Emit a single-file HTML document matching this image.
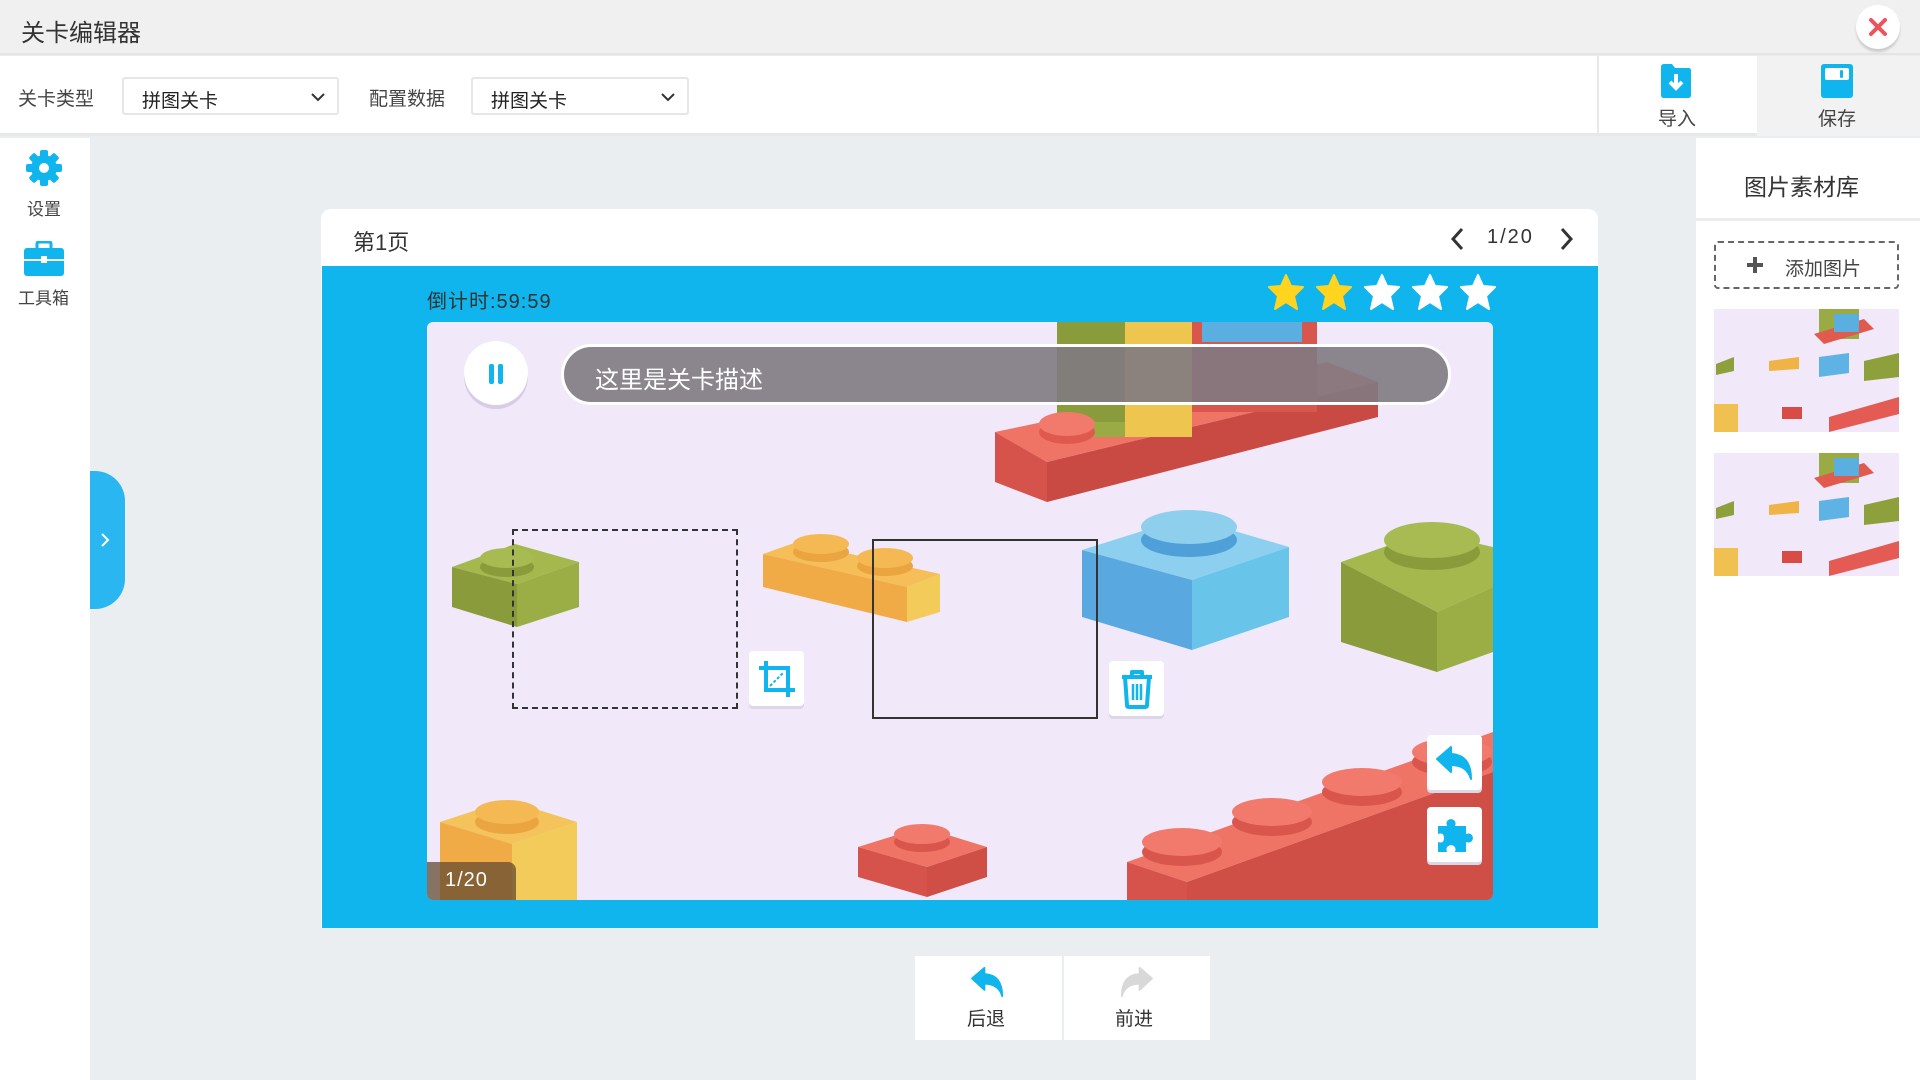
<!DOCTYPE html>
<html><head><meta charset="utf-8"><style>
*{margin:0;padding:0;box-sizing:border-box}
body{width:1920px;height:1080px;background:#ebeef1;font-family:"Liberation Sans","Noto Sans CJK SC",sans-serif;color:#333;position:relative;overflow:hidden}
.a{position:absolute}
.sel{position:absolute;background:#fff;border:2px solid #e6e6e6;border-radius:3px;font-size:19px;color:#222;padding-left:18px}
.sel span{position:absolute;left:18px;top:7px}
.sel svg{position:absolute;right:12px;top:14px}
.btn{position:absolute;background:#fff;border-radius:4px;box-shadow:0 3px 0 #ddd6e6;display:flex;align-items:center;justify-content:center}
</style></head><body>
<div class="a" style="left:0;top:0;width:1920px;height:55px;background:#f0f0f0;border-bottom:2px solid #e4e4e4"></div>
<div class="a" style="left:21px;top:13px;font-size:24px;color:#333">关卡编辑器</div>
<div class="a" style="left:1856px;top:5px;width:44px;height:44px;border-radius:50%;background:#fff;box-shadow:0 3px 2px #ccc"></div>
<svg class="a" style="left:1868px;top:17px" width="20" height="20" viewBox="0 0 20 20"><path d="M3 3L17 17M17 3L3 17" stroke="#f0525b" stroke-width="4" stroke-linecap="round"/></svg>
<div class="a" style="left:0;top:56px;width:1920px;height:80px;background:#fff;border-bottom:3px solid #e8e8e8"></div>
<div class="a" style="left:18px;top:84px;font-size:19px;color:#444">关卡类型</div>
<div class="sel" style="left:122px;top:77px;width:217px;height:38px"><span>拼图关卡</span><svg width="14" height="9" viewBox="0 0 14 9"><path d="M1 1L7 7L13 1" fill="none" stroke="#333" stroke-width="2"/></svg></div>
<div class="a" style="left:369px;top:84px;font-size:19px;color:#444">配置数据</div>
<div class="sel" style="left:471px;top:77px;width:218px;height:38px"><span>拼图关卡</span><svg width="14" height="9" viewBox="0 0 14 9"><path d="M1 1L7 7L13 1" fill="none" stroke="#333" stroke-width="2"/></svg></div>
<div class="a" style="left:1597px;top:56px;width:2px;height:80px;background:#e8e8e8"></div>
<div class="a" style="left:1757px;top:56px;width:163px;height:80px;background:#f2f2f2"></div>
<svg class="a" style="left:1659px;top:63px" width="34" height="36" viewBox="0 0 34 36"><path d="M2 4Q2 1 5 1H13L16 5H30Q32 5 32 8V32Q32 35 29 35H5Q2 35 2 32Z" fill="#0fb5ec"/><path d="M17 11V24M11 19L17 25L23 19" fill="none" stroke="#fff" stroke-width="4"/></svg>
<div class="a" style="left:1658px;top:104px;font-size:19px;color:#444">导入</div>
<svg class="a" style="left:1820px;top:63px" width="34" height="36" viewBox="0 0 34 36"><rect x="1" y="1" width="32" height="34" rx="3" fill="#0fb5ec"/><rect x="5" y="5" width="24" height="12" rx="2" fill="#fff"/><rect x="20" y="7" width="3" height="8" rx="1.5" fill="#0fb5ec"/></svg>
<div class="a" style="left:1818px;top:104px;font-size:19px;color:#444">保存</div>
<div class="a" style="left:0;top:138px;width:90px;height:942px;background:#fff"></div>
<svg class="a" style="left:25px;top:149px" width="38" height="38" viewBox="0 0 38 38"><g fill="#0fb5ec"><circle cx="19" cy="19" r="13"/><g id="t"><rect x="15" y="1" width="8" height="36" rx="2"/></g><use href="#t" transform="rotate(45 19 19)"/><use href="#t" transform="rotate(90 19 19)"/><use href="#t" transform="rotate(135 19 19)"/></g><circle cx="19" cy="19" r="5" fill="#fff"/></svg>
<div class="a" style="left:27px;top:195px;font-size:17px;color:#444">设置</div>
<svg class="a" style="left:24px;top:241px" width="40" height="35" viewBox="0 0 40 35"><path d="M13 7V3Q13 1 15 1H25Q27 1 27 3V7" fill="none" stroke="#0fb5ec" stroke-width="3"/><rect x="0" y="7" width="40" height="28" rx="3" fill="#0fb5ec"/><rect x="0" y="18" width="40" height="2" fill="#fff"/><rect x="17" y="15" width="6" height="7" fill="#fff"/></svg>
<div class="a" style="left:18px;top:284px;font-size:17px;color:#444">工具箱</div>
<div class="a" style="left:90px;top:471px;width:35px;height:138px;background:#2ab6f0;border-radius:0 30px 30px 0"></div>
<svg class="a" style="left:100px;top:533px" width="10" height="14" viewBox="0 0 10 14"><path d="M2 1L8 7L2 13" fill="none" stroke="#fff" stroke-width="2"/></svg>
<div class="a" style="left:1696px;top:138px;width:224px;height:942px;background:#fff"></div>
<div class="a" style="left:1696px;top:218px;width:224px;height:3px;background:#ececec"></div>
<div class="a" style="left:1744px;top:168px;font-size:23px;color:#333">图片素材库</div>
<div class="a" style="left:1714px;top:241px;width:185px;height:48px;border:2px dashed #666;border-radius:4px"></div>
<svg class="a" style="left:1745px;top:255px" width="20" height="20" viewBox="0 0 20 20"><path d="M10 2V18M2 10H18" stroke="#555" stroke-width="4"/></svg>
<div class="a" style="left:1785px;top:254px;font-size:19px;color:#444">添加图片</div>
<svg class="a" style="left:1714px;top:309px" width="185" height="123" viewBox="0 0 185 123"><rect width="185" height="123" fill="#f1e8fa"/><rect x="105" y="0" width="40" height="30" fill="#9aab45"/><polygon points="100,25 150,10 160,20 110,35" fill="#e05a4e"/><rect x="120" y="5" width="25" height="18" fill="#5aaee0"/><polygon points="2,55 20,48 20,62 2,66" fill="#8ea03c"/><polygon points="55,52 85,48 85,60 55,62" fill="#f0b446"/><polygon points="105,48 135,44 135,64 105,68" fill="#5eb3e4"/><polygon points="150,52 185,44 185,68 150,72" fill="#8ea03c"/><rect x="0" y="95" width="24" height="28" fill="#f0c050"/><rect x="68" y="98" width="20" height="12" fill="#d94b45"/><polygon points="115,108 185,88 185,105 115,123" fill="#e45b53"/></svg>
<svg class="a" style="left:1714px;top:453px" width="185" height="123" viewBox="0 0 185 123"><rect width="185" height="123" fill="#f1e8fa"/><rect x="105" y="0" width="40" height="30" fill="#9aab45"/><polygon points="100,25 150,10 160,20 110,35" fill="#e05a4e"/><rect x="120" y="5" width="25" height="18" fill="#5aaee0"/><polygon points="2,55 20,48 20,62 2,66" fill="#8ea03c"/><polygon points="55,52 85,48 85,60 55,62" fill="#f0b446"/><polygon points="105,48 135,44 135,64 105,68" fill="#5eb3e4"/><polygon points="150,52 185,44 185,68 150,72" fill="#8ea03c"/><rect x="0" y="95" width="24" height="28" fill="#f0c050"/><rect x="68" y="98" width="20" height="12" fill="#d94b45"/><polygon points="115,108 185,88 185,105 115,123" fill="#e45b53"/></svg>
<div class="a" style="left:321px;top:209px;width:1277px;height:719px;background:#fff;border-radius:10px 10px 0 0"></div>
<div class="a" style="left:353px;top:225px;font-size:22px;color:#333">第1页</div>
<svg class="a" style="left:1450px;top:227px" width="14" height="24" viewBox="0 0 14 24"><path d="M12 2L3 12L12 22" fill="none" stroke="#333" stroke-width="3"/></svg>
<div class="a" style="left:1487px;top:226px;font-size:20px;color:#333;letter-spacing:2px">1/20</div>
<svg class="a" style="left:1560px;top:227px" width="14" height="24" viewBox="0 0 14 24"><path d="M2 2L11 12L2 22" fill="none" stroke="#333" stroke-width="3"/></svg>
<div class="a" style="left:322px;top:266px;width:1276px;height:662px;background:#0fb5ec"></div>
<div class="a" style="left:427px;top:285px;font-size:20px;color:#333;letter-spacing:1px">倒计时:59:59</div>
<svg class="a" style="left:1266px;top:274px" width="236" height="40" viewBox="0 0 236 40">
<defs><path id="s" d="M18 1L23 12L35 13L26 22L29 35L18 28L7 35L10 22L1 13L13 12Z" stroke-linejoin="round"/></defs>
<use href="#s" x="2" fill="#ffd41f" stroke="#ffd41f" stroke-width="2"/><use href="#s" x="50" fill="#ffd41f" stroke="#ffd41f" stroke-width="2"/><use href="#s" x="98" fill="#fff" stroke="#fff" stroke-width="2"/><use href="#s" x="146" fill="#fff" stroke="#fff" stroke-width="2"/><use href="#s" x="194" fill="#fff" stroke="#fff" stroke-width="2"/></svg>
<div class="a" style="left:427px;top:322px;width:1066px;height:578px;background:#f1e8fa;border-radius:6px;overflow:hidden">
<svg width="1066" height="578" viewBox="0 0 1066 578" style="position:absolute;left:0;top:0">
<polygon points="568,110 900,40 951,60 620,140" fill="#f07466"/>
<polygon points="568,110 620,140 620,180 568,160" fill="#d5534a"/>
<polygon points="620,140 951,60 951,95 620,180" fill="#c84a42"/>
<rect x="630" y="0" width="135" height="115" fill="#9aab45"/><rect x="698" y="0" width="67" height="115" fill="#eec64f"/><rect x="630" y="0" width="68" height="100" fill="#8a9b3c"/>
<rect x="765" y="0" width="125" height="90" fill="#d9564c"/><rect x="775" y="0" width="100" height="20" fill="#5aaee0"/>
<ellipse cx="640" cy="110" rx="28" ry="12" fill="#e0594f"/><ellipse cx="640" cy="102" rx="28" ry="12" fill="#f27a6c"/>
<polygon points="25,245 88,222 152,240 90,262" fill="#a5b84d"/>
<polygon points="25,245 90,262 90,305 25,285" fill="#8a9b3c"/>
<polygon points="90,262 152,240 152,285 90,305" fill="#9bae45"/>
<ellipse cx="80" cy="245" rx="27" ry="10" fill="#8a9b3c"/><ellipse cx="80" cy="236" rx="27" ry="10" fill="#a8bb52"/>
<polygon points="336,232 370,220 513,252 480,265" fill="#f5be58"/>
<polygon points="336,232 480,265 480,300 336,265" fill="#f0aa46"/>
<polygon points="480,265 513,252 513,290 480,300" fill="#f3cb5a"/>
<ellipse cx="394" cy="230" rx="28" ry="10" fill="#eaa540"/><ellipse cx="394" cy="222" rx="28" ry="10" fill="#f5b954"/>
<ellipse cx="458" cy="244" rx="28" ry="10" fill="#eaa540"/><ellipse cx="458" cy="236" rx="28" ry="10" fill="#f5b954"/>
<polygon points="655,228 760,195 862,225 765,258" fill="#8ccfee"/>
<polygon points="655,228 765,258 765,328 655,295" fill="#5aa8e0"/>
<polygon points="765,258 862,225 862,295 765,328" fill="#68c4e8"/>
<ellipse cx="762" cy="218" rx="48" ry="17" fill="#4fa0d8"/><ellipse cx="762" cy="205" rx="48" ry="17" fill="#8fcfee"/>
<polygon points="914,240 1000,210 1066,225 1066,265 1010,290" fill="#a5b84d"/>
<polygon points="914,240 1010,290 1010,350 914,320" fill="#8a9b3c"/>
<polygon points="1010,290 1066,265 1066,330 1010,350" fill="#9bae45"/>
<ellipse cx="1005" cy="230" rx="48" ry="18" fill="#8a9b3c"/><ellipse cx="1005" cy="218" rx="48" ry="18" fill="#a8bb52"/>
<polygon points="13,500 80,478 150,500 85,522" fill="#f5c35c"/>
<polygon points="13,500 85,522 85,578 13,578" fill="#f0aa46"/>
<polygon points="85,522 150,500 150,578 85,578" fill="#f3cb5a"/>
<ellipse cx="80" cy="500" rx="32" ry="12" fill="#eaa540"/><ellipse cx="80" cy="490" rx="32" ry="12" fill="#f5b954"/>
<polygon points="431,525 495,505 560,525 500,545" fill="#f07466"/>
<polygon points="431,525 500,545 500,575 431,555" fill="#d5534a"/>
<polygon points="500,545 560,525 560,555 500,575" fill="#cf4e46"/>
<ellipse cx="495" cy="520" rx="28" ry="10" fill="#d9564c"/><ellipse cx="495" cy="512" rx="28" ry="10" fill="#f27a6c"/>
<polygon points="700,540 1066,410 1066,450 760,560" fill="#f07466"/>
<polygon points="700,540 760,560 760,578 700,578" fill="#d5534a"/>
<polygon points="760,560 1066,450 1066,578 760,578" fill="#cf4e46"/>
<ellipse cx="755" cy="530" rx="40" ry="14" fill="#d9564c"/><ellipse cx="755" cy="520" rx="40" ry="14" fill="#f27a6c"/>
<ellipse cx="845" cy="500" rx="40" ry="14" fill="#d9564c"/><ellipse cx="845" cy="490" rx="40" ry="14" fill="#f27a6c"/>
<ellipse cx="935" cy="470" rx="40" ry="14" fill="#d9564c"/><ellipse cx="935" cy="460" rx="40" ry="14" fill="#f27a6c"/>
<ellipse cx="1025" cy="440" rx="40" ry="14" fill="#d9564c"/><ellipse cx="1025" cy="430" rx="40" ry="14" fill="#f27a6c"/>
</svg>
<div class="a" style="left:134px;top:22px;width:890px;height:61px;border:3px solid #fff;border-radius:31px;background:rgba(128,122,130,0.9)"></div>
<div class="a" style="left:168px;top:38px;font-size:24px;color:#fff">这里是关卡描述</div>
<div class="a" style="left:37px;top:19px;width:64px;height:64px;border-radius:50%;background:#fff;box-shadow:0 4px 0 #d8cce6"></div>
<div class="a" style="left:62px;top:42px;width:5px;height:20px;background:#0fb5ec;border-radius:2px"></div>
<div class="a" style="left:71px;top:42px;width:5px;height:20px;background:#0fb5ec;border-radius:2px"></div>
<div class="a" style="left:85px;top:207px;width:226px;height:180px;border:2px dashed #333"></div>
<div class="a" style="left:445px;top:217px;width:226px;height:180px;border:2px solid #333"></div>
<div class="btn" style="left:322px;top:329px;width:55px;height:55px"><svg width="40" height="40" viewBox="0 0 40 40"><path d="M9 2V31H38M2 9H31V38" fill="none" stroke="#0fb5ec" stroke-width="4"/><path d="M13 27L27 13" stroke="#0fb5ec" stroke-width="2" stroke-dasharray="3 2"/></svg></div>
<div class="btn" style="left:682px;top:339px;width:55px;height:55px"><svg width="34" height="40" viewBox="0 0 34 40"><path d="M12 6V3H22V6M2 8H32M5 8L7 36Q7 38 9 38H25Q27 38 27 36L29 8" fill="none" stroke="#0fb5ec" stroke-width="4" stroke-linejoin="round"/><path d="M13 15V31M17 15V31M21 15V31" stroke="#0fb5ec" stroke-width="2.5"/></svg></div>
<div class="btn" style="left:1000px;top:413px;width:55px;height:55px"><svg width="40" height="36" viewBox="0 0 40 36"><path d="M2 14L16 2V9Q36 10 36 34Q32 20 16 20V27Z" fill="#0fb5ec" stroke="#0fb5ec" stroke-width="2" stroke-linejoin="round"/></svg></div>
<div class="btn" style="left:1000px;top:485px;width:55px;height:55px"><svg width="42" height="42" viewBox="0 0 42 42"><path d="M4 12H13Q11 6 17 5Q23 6 21 12H32V20Q38 18 39 24Q38 30 32 28V38H21Q23 32 17 31Q11 32 13 38H4V28Q10 30 10 24Q10 18 4 20Z" fill="#0fb5ec"/></svg></div>
<div class="a" style="left:0;top:540px;width:89px;height:38px;background:rgba(100,75,50,0.75);border-radius:0 8px 0 0"></div>
<div class="a" style="left:18px;top:547px;font-size:20px;color:#fff;letter-spacing:1px">1/20</div>
</div>
<div class="a" style="left:915px;top:956px;width:147px;height:84px;background:#fff"></div>
<div class="a" style="left:1064px;top:956px;width:146px;height:84px;background:#fff"></div>
<svg class="a" style="left:969px;top:966px" width="38" height="32" viewBox="0 0 40 36"><path d="M2 14L16 2V9Q36 10 36 34Q32 20 16 20V27Z" fill="#0fb5ec" stroke="#0fb5ec" stroke-width="2" stroke-linejoin="round"/></svg>
<div class="a" style="left:967px;top:1004px;font-size:19px;color:#333">后退</div>
<svg class="a" style="left:1117px;top:966px" width="38" height="32" viewBox="0 0 40 36"><path d="M38 14L24 2V9Q4 10 4 34Q8 20 24 20V27Z" fill="#d8d8d8" stroke="#d8d8d8" stroke-width="2" stroke-linejoin="round"/></svg>
<div class="a" style="left:1115px;top:1004px;font-size:19px;color:#333">前进</div>
</body></html>
